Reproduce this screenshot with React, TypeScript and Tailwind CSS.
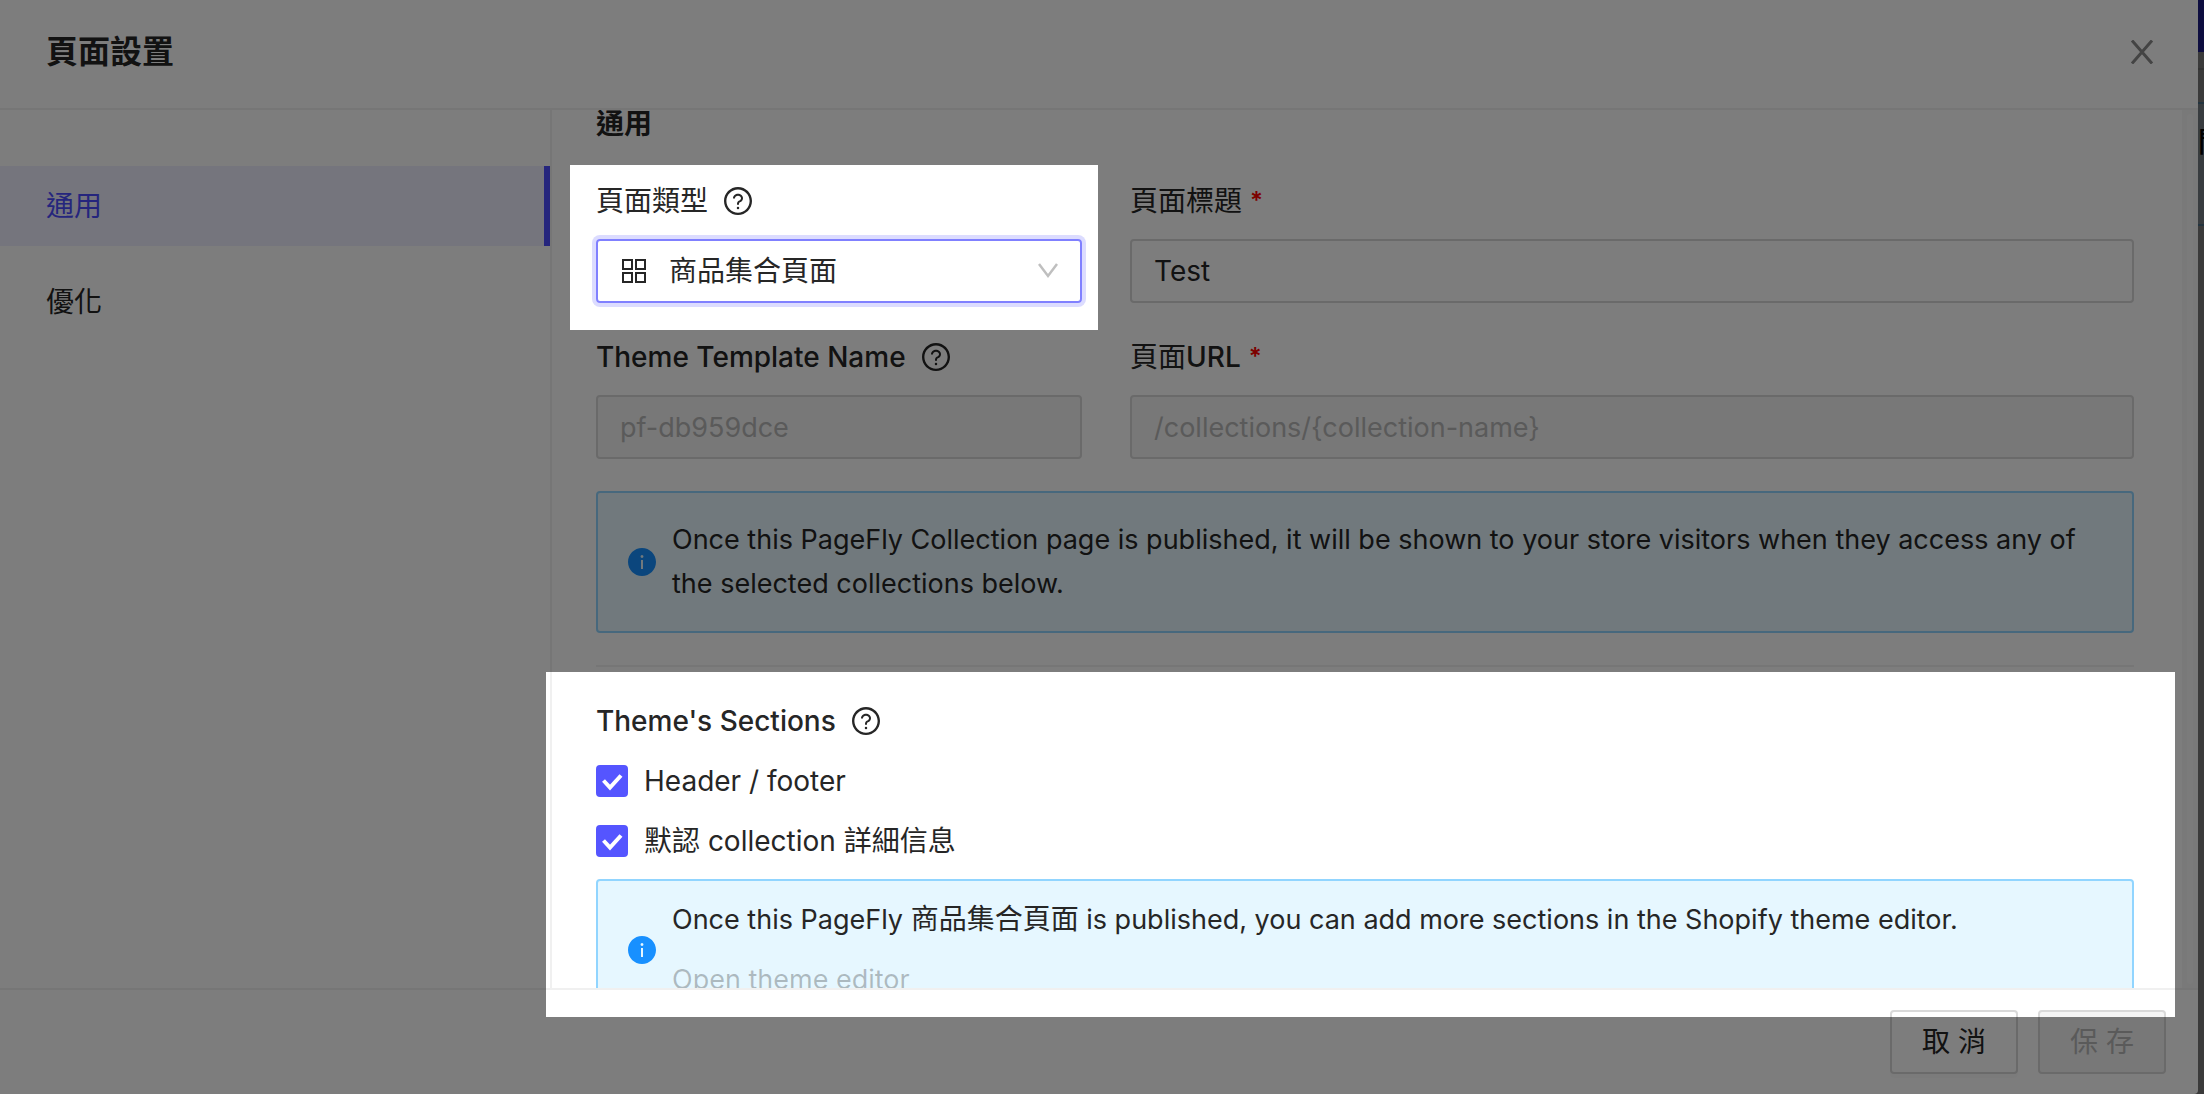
import { useState } from 'react';

const menu = ['通用', '優化'];

function HelpIcon() {
    return (
        <svg viewBox="64 64 896 896" className="w-7 h-7 shrink-0" fill="currentColor" aria-hidden="true">
            <path d="M512 64C264.6 64 64 264.6 64 512s200.600 448 448 448 448-200.600 448-448S759.400 64 512 64zm0 820c-205.400 0-372-166.600-372-372s166.600-372 372-372 372 166.600 372 372-166.600 372-372 372z" />
            <path d="M623.600 316.700C593.600 290.400 554 276 512 276s-81.600 14.500-111.600 40.700C369.200 344 352 380.700 352 420v7.600c0 4.400 3.600 8 8 8h48c4.400 0 8-3.600 8-8V420c0-44.100 43.100-80 96-80s96 35.900 96 80c0 31.100-22 59.600-56.100 72.700-21.200 8.100-39.200 22.300-52.100 40.900-13.100 19-19.900 41.800-19.900 64.900V620c0 4.400 3.600 8 8 8h48c4.400 0 8-3.600 8-8v-22.700a48.300 48.300 0 0130.900-44.800c59-22.700 97.100-74.700 97.100-132.500.1-39.300-17.100-76-48.300-103.300zM472 732a40 40 0 1080 0 40 40 0 10-80 0z" />
        </svg>
    );
}

function InfoIcon() {
    return (
        <svg viewBox="64 64 896 896" className="w-7 h-7 shrink-0 text-[#1890ff]" fill="currentColor" aria-hidden="true">
            <path d="M512 64C264.6 64 64 264.6 64 512s200.600 448 448 448 448-200.600 448-448S759.400 64 512 64zm32 664c0 4.400-3.600 8-8 8h-48c-4.400 0-8-3.600-8-8V456c0-4.400 3.600-8 8-8h48c4.400 0 8 3.600 8 8v272zm-32-344a48.010 48.010 0 010-96 48.010 48.010 0 010 96z" />
        </svg>
    );
}

function Checkbox({ label }: { label: string }) {
    const [checked, setChecked] = useState(true);

    return (
        <label className="flex items-center gap-4 w-fit cursor-pointer">
            <span className="relative w-8 h-8 shrink-0">
                <input
                    type="checkbox"
                    checked={checked}
                    onChange={(e) => setChecked(e.target.checked)}
                    className="peer block appearance-none w-8 h-8 rounded-[4px] border-2 border-[#d9d9d9] bg-white checked:border-[#5555ff] checked:bg-[#5555ff]"
                />
                <svg viewBox="0 0 32 32" className="absolute inset-0 hidden peer-checked:block pointer-events-none" fill="none" stroke="#fff" strokeWidth="4">
                    <path d="M7.500 15.500l6.500 7L25 10.500" />
                </svg>
            </span>
            {label}
        </label>
    );
}

export default function App() {
    const [active, setActive] = useState('通用');
    const [title, setTitle] = useState('Test');

    return (
        <div className="relative flex h-screen overflow-hidden bg-[#777] font-[Inter,'Noto_Sans_CJK_TC',sans-serif] text-[28px] leading-[44px] text-[#262626]">
            <div className="flex flex-col flex-1 min-w-0 bg-white rounded-br-[4px] overflow-hidden">
                <header className="flex items-center justify-between h-[110px] shrink-0 pl-[46px] pr-11 pb-1 border-b-2 border-[#f0f0f0]">
                    <h1 className="text-[32px] font-bold">頁面設置</h1>
                    <button type="button" aria-label="Close" className="text-[#8c8c8c]">
                        <svg viewBox="0 0 24 24" className="w-6 h-6" fill="none" stroke="currentColor" strokeWidth="3">
                            <path d="M2 0.500l20 23M22 0.500l-20 23" />
                        </svg>
                    </button>
                </header>

                <div className="flex flex-1 min-h-0">
                    <nav className="flex flex-col gap-4 w-[552px] shrink-0 pt-14 border-r-2 border-[#f0f0f0]">
                        {menu.map((item) => (
                            <button
                                key={item}
                                type="button"
                                onClick={() => setActive(item)}
                                className={`h-20 px-[46px] text-left border-r-[6px] ${item === active
                                    ? 'bg-[#efefff] border-[#4d4dff] text-[#4d4dff]'
                                    : 'border-transparent'
                                    }`}
                            >
                                {item}
                            </button>
                        ))}
                    </nav>

                    <main className="flex-1 min-w-0 overflow-hidden pl-11 pr-12">
                        <h2 className="font-bold leading-[28px] mb-[41px]">通用</h2>

                        <div className="grid grid-cols-[486px_1fr] gap-x-12 gap-y-8">
                            <div>
                                <label htmlFor="page-type" className="flex items-center gap-4 mb-4">
                                    頁面類型
                                    <HelpIcon />
                                </label>
                                <div className="relative">
                                    <svg viewBox="0 0 24 24" className="absolute left-[26px] top-5 w-6 h-6" fill="none" stroke="currentColor" strokeWidth="2">
                                        <path d="M1 1h9v9H1zM14 1h9v9h-9zM1 14h9v9H1zM14 14h9v9h-9z" />
                                    </svg>
                                    <select
                                        id="page-type"
                                        className="block appearance-none w-full h-16 pl-[71px] pr-14 bg-transparent border-2 border-[#8080ff] rounded-[4px] shadow-[0_0_0_4px_#dcdcff] outline-none"
                                    >
                                        <option>商品集合頁面</option>
                                    </select>
                                    <svg viewBox="0 0 20 16" className="absolute right-6 top-6 w-5 h-4 pointer-events-none text-[#bfbfbf]" fill="none" stroke="currentColor" strokeWidth="2.500">
                                        <path d="M1 1l9 12 9-12" />
                                    </svg>
                                </div>
                            </div>

                            <div>
                                <label htmlFor="page-title" className="flex gap-2 mb-4">
                                    頁面標題
                                    <span className="text-2xl leading-[44px] font-semibold text-[#ff0000]">*</span>
                                </label>
                                <input
                                    id="page-title"
                                    value={title}
                                    onChange={(e) => setTitle(e.target.value)}
                                    className="block w-full h-16 px-[22px] border-2 border-[#d9d9d9] rounded-[4px]"
                                />
                            </div>

                            <div>
                                <label htmlFor="template-name" className="flex items-center gap-4 mb-4 font-medium">
                                    Theme Template Name
                                    <HelpIcon />
                                </label>
                                <input
                                    id="template-name"
                                    disabled
                                    value="pf-db959dce"
                                    className="block w-full h-16 px-[22px] border-2 border-[#d9d9d9] rounded-[4px] bg-[#f5f5f5] text-[27px] text-[#b8b8b8]"
                                />
                            </div>

                            <div>
                                <label htmlFor="page-url" className="flex gap-2 mb-4">
                                    <span>頁面<span className="font-medium">URL</span></span>
                                    <span className="text-2xl leading-[44px] font-semibold text-[#ff0000]">*</span>
                                </label>
                                <input
                                    id="page-url"
                                    disabled
                                    value="/collections/{collection-name}"
                                    className="block w-full h-16 px-[22px] border-2 border-[#d9d9d9] rounded-[4px] bg-[#f5f5f5] text-[27px] text-[#b8b8b8]"
                                />
                            </div>
                        </div>

                        <div className="flex items-center gap-4 mt-8 px-[30px] py-[25px] border-2 border-[#91d5ff] rounded-[4px] bg-[#e6f7ff]">
                            <InfoIcon />
                            <p className="text-[27px]">
                                Once this PageFly Collection page is published, it will be shown to your store visitors when they access any of the selected collections below.
                            </p>
                        </div>

                        <hr className="my-8 border-t-2 border-[#f0f0f0]" />

                        <section className="flex flex-col gap-4">
                            <h3 className="flex items-center gap-4 font-medium">
                                Theme's Sections
                                <HelpIcon />
                            </h3>
                            <Checkbox label="Header / footer" />
                            <Checkbox label="默認 collection 詳細信息" />
                            <div className="flex items-center gap-4 px-[30px] py-4 border-2 border-[#91d5ff] rounded-[4px] bg-[#e6f7ff]">
                                <InfoIcon />
                                <div className="flex flex-col items-start gap-4 text-[27px]">
                                    <p>Once this PageFly <span className="text-[28px]">商品集合頁面</span> is published, you can add more sections in the Shopify theme editor.</p>
                                    <button type="button" disabled className="text-black/25">Open theme editor</button>
                                </div>
                            </div>
                        </section>
                    </main>

                    {/* scrollbar track */}
                    <div className="w-4 shrink-0 px-[5px] py-1 bg-[#f6f6f6]">
                        <div className="h-full rounded-full bg-[#fafafa]" />
                    </div>
                </div>

                <footer className="flex items-center justify-end gap-5 h-[106px] shrink-0 px-8 border-t-2 border-[#f0f0f0]">
                    <button type="button" className="w-32 h-16 border-2 border-[#d9d9d9] rounded-[4px] shadow-[0_4px_0_rgba(0,0,0,0.015)]">取 消</button>
                    <button type="button" disabled className="w-32 h-16 border-2 border-[#d9d9d9] rounded-[4px] bg-[#f5f5f5] text-[#b8b8b8]">保 存</button>
                </footer>
            </div>

            {/* edge of the editor behind the drawer */}
            <div className="flex flex-col w-[6px] shrink-0 overflow-hidden" aria-hidden="true">
                <div className="h-[52px] bg-[#1c1c80]" />
                <div className="h-[18px] border-b-2 border-[#686868]" />
                <div className="h-[124px] mt-8 py-4 border-y-2 border-[#486b80] bg-[#737b80] font-medium text-black">開</div>
            </div>

            {/* dimmed backdrop with two lit areas */}
            <div className="absolute inset-0 pointer-events-none bg-black/51 [clip-path:polygon(evenodd,0_0,100%_0,100%_100%,0_100%,0_0,570px_165px,1098px_165px,1098px_330px,570px_330px,570px_165px,0_0,546px_672px,calc(100%_-_29px)_672px,calc(100%_-_29px)_1017px,546px_1017px,546px_672px,0_0)]" />
        </div>
    );
}
